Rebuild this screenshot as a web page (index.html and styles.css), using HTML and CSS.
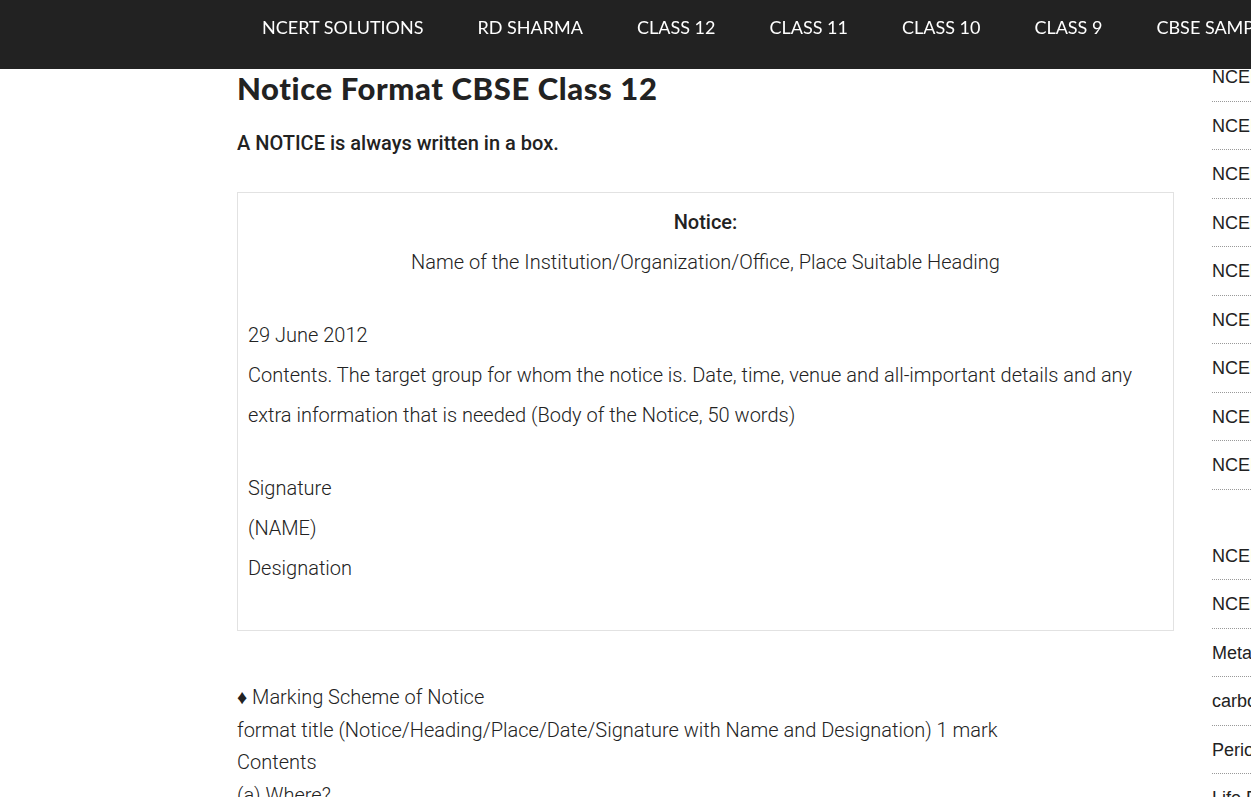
FILE: index.html
```html
<!DOCTYPE html>
<html lang="en">
<head>
<meta charset="utf-8">
<title>Notice Format CBSE Class 12</title>
<link rel="stylesheet" href="styles.css">
</head>
<body>
<header class="topbar">
  <nav class="main-nav">
    <ul class="nav-list">
      <li class="nav-item"><a href="#">NCERT SOLUTIONS</a></li>
      <li class="nav-item"><a href="#">RD SHARMA</a></li>
      <li class="nav-item"><a href="#">CLASS 12</a></li>
      <li class="nav-item"><a href="#">CLASS 11</a></li>
      <li class="nav-item"><a href="#">CLASS 10</a></li>
      <li class="nav-item"><a href="#">CLASS 9</a></li>
      <li class="nav-item"><a href="#">CBSE SAMPLE PAPERS</a></li>
    </ul>
  </nav>
</header>

<div class="page">
  <main class="content">
    <h1 class="entry-title">Notice Format CBSE Class 12</h1>
    <p class="intro"><strong>A NOTICE is always written in a box.</strong></p>

    <div class="notice-box">
      <p class="centered"><strong>Notice:</strong><br>Name of the Institution/Organization/Office, Place Suitable Heading</p>
      <p>29 June 2012<br>Contents. The target group for whom the notice is. Date, time, venue and all-important details and any extra information that is needed (Body of the Notice, 50 words)</p>
      <p>Signature<br>(NAME)<br>Designation</p>
    </div>

    <p class="scheme">♦ Marking Scheme of Notice<br>format title (Notice/Heading/Place/Date/Signature with Name and Designation) 1 mark<br>Contents<br>(a) Where?<br>(b) When?<br>(c) What?</p>
  </main>

  <aside class="sidebar">
    <section class="widget">
      <ul class="widget-list">
        <li><a href="#">NCERT Solutions for Class 12 Maths</a></li>
        <li><a href="#">NCERT Solutions for Class 12 Physics</a></li>
        <li><a href="#">NCERT Solutions for Class 12 Chemistry</a></li>
        <li><a href="#">NCERT Solutions for Class 12 Biology</a></li>
        <li><a href="#">NCERT Solutions for Class 11 Maths</a></li>
        <li><a href="#">NCERT Solutions for Class 11 Physics</a></li>
        <li><a href="#">NCERT Solutions for Class 10 Maths</a></li>
        <li><a href="#">NCERT Solutions for Class 10 Science</a></li>
        <li><a href="#">NCERT Solutions for Class 9 Maths</a></li>
      </ul>
    </section>
    <section class="widget">
      <ul class="widget-list">
        <li><a href="#">NCERT Solutions for Class 10 Science Chapter 1</a></li>
        <li><a href="#">NCERT Solutions for Class 10 Science Chapter 2</a></li>
        <li><a href="#">Metals and Non-metals Class 10</a></li>
        <li><a href="#">carbon and its compounds class 10</a></li>
        <li><a href="#">Periodic Classification of Elements</a></li>
        <li><a href="#">Life Processes Class 10</a></li>
      </ul>
    </section>
  </aside>
</div>
</body>
</html>
```

FILE: styles.css
```css
html {
  overflow: hidden;
}

body {
  margin: 0;
  font-family: Roboto, "Noto Sans", sans-serif;
  font-weight: 300;
  font-size: 20px;
  color: #222;
  background: #fff;
}

a {
  color: inherit;
  text-decoration: none;
}

.topbar {
  position: fixed;
  top: 0;
  left: 0;
  right: 0;
  height: 69px;
  background: #222;
  z-index: 10;
}

.nav-list {
  display: flex;
  margin: 0;
  padding: 0 0 0 235px;
  list-style: none;
  white-space: nowrap;
}

.nav-item a {
  display: block;
  padding: 0 27px;
  line-height: 55px;
  font-family: Lato, "Open Sans", sans-serif;
  font-weight: 400;
  font-size: 18px;
  color: #fff;
}

.page {
  display: flex;
  gap: 38px;
  padding: 52px 0 0 237px;
}

.content {
  flex: 0 0 937px;
}

.entry-title {
  margin: 17px 0 16px;
  font-family: Lato, "Open Sans", sans-serif;
  font-weight: 900;
  font-size: 31px;
  letter-spacing: 0.6px;
  line-height: 38px;
  color: #222;
}

.intro {
  margin: 0 0 29px;
  line-height: 40px;
}

.intro strong,
.centered strong {
  font-weight: 500;
}

.notice-box {
  border: 1px solid #e2e2e2;
  padding: 9px 10px;
}

.notice-box p {
  margin: 0 0 33px;
  line-height: 40px;
}

.notice-box .centered {
  text-align: center;
}

.scheme {
  margin: 50px 0 0;
  line-height: 32.5px;
}

.sidebar {
  flex: 0 0 320px;
  margin-top: 1px;
  font-family: "Liberation Sans", Arial, sans-serif;
  font-weight: 400;
  font-size: 18px;
}

.widget {
  margin-bottom: 42px;
}

.widget-list {
  margin: 0;
  padding: 0;
  list-style: none;
}

.widget-list li {
  padding: 14px 0 13.5px;
  line-height: 20px;
  border-bottom: 1px dotted #999;
  white-space: nowrap;
}
```
